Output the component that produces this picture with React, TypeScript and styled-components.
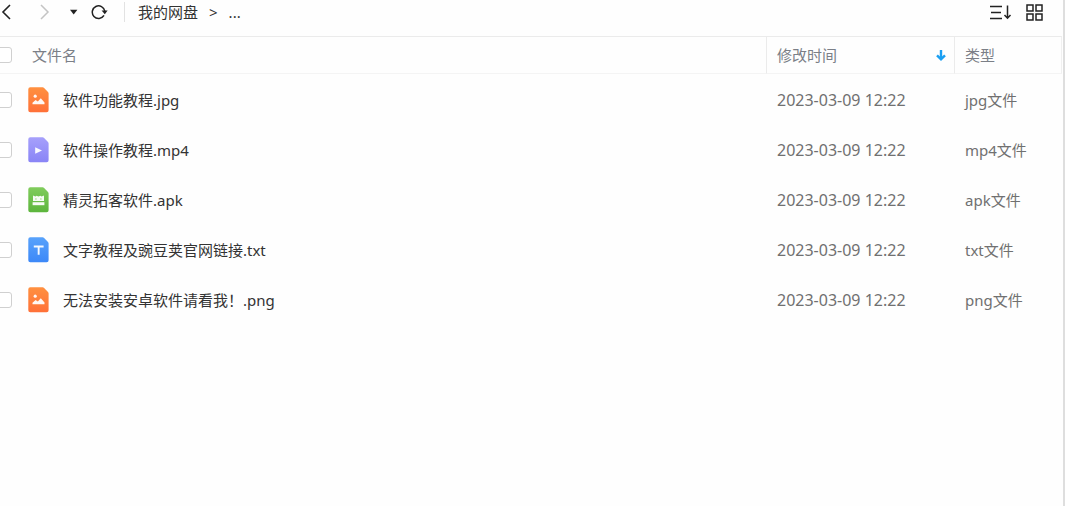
import React from "react";
import styled, { createGlobalStyle } from "styled-components";

const Global = createGlobalStyle`
  *, *::before, *::after { box-sizing: border-box; }
  body {
    margin: 0;
    background: #fefefe;
    color: #333;
    font: 15px/20px "Noto Sans", "Noto Sans CJK SC", sans-serif;
    overflow: hidden;
  }
  button { font: inherit; color: inherit; border: 0; padding: 0; background: none; }
  svg { flex: none; }
`;

const Window = styled.main`
  min-height: 100vh;
  overflow: hidden;
  padding-right: 1px;
  border-right: 2px solid #dedede;
`;

const Toolbar = styled.header`
  display: flex;
  align-items: center;
  justify-content: space-between;
  height: 36px;
  padding: 0 18px 12px 0;
`;

const Group = styled.div<{ $gap: number }>`
  display: flex;
  align-items: center;
  gap: ${({ $gap }) => $gap}px;
`;

const IconButton = styled.button<{ $width: number; $color?: string }>`
  display: flex;
  align-items: center;
  justify-content: center;
  width: ${({ $width }) => $width}px;
  height: 24px;
  color: ${({ $color }) => $color ?? "#222"};
`;

const Breadcrumb = styled.nav`
  display: flex;
  gap: 11px;
  margin-left: 4px;
  padding-left: 13px;
  border-left: 1px solid #e2e2e2;
  a { color: #333; text-decoration: none; }
`;

const FileTable = styled.table`
  width: calc(100% + 4px);
  margin-left: -4px;
  table-layout: fixed;
  border-collapse: separate;
  border-spacing: 0;
`;

const Column = styled.col<{ $width?: number }>`
  width: ${({ $width }) => ($width ? `${$width}px` : "auto")};
`;

const HeadCell = styled.th<{ $divided?: boolean; $last?: boolean }>`
  height: 38px;
  padding: 0 8px 0 ${({ $divided }) => ($divided ? 10 : 0)}px;
  border-top: 1px solid #ebebeb;
  border-bottom: 1px solid #f4f4f4;
  border-left: ${({ $divided }) => ($divided ? "1px solid #ebebeb" : "0")};
  border-right: ${({ $last }) => ($last ? "1px solid #f0f0f0" : "0")};
  font-weight: 400;
  text-align: left;
  color: #7b7f87;
`;

const HeadContent = styled.div<{ $indent?: boolean }>`
  display: flex;
  align-items: center;
  justify-content: space-between;
  height: 20px;
  padding-left: ${({ $indent }) => ($indent ? 8 : 0)}px;
`;

const Cell = styled.td<{ $meta?: boolean }>`
  height: 50px;
  padding: 2px 0 0 ${({ $meta }) => ($meta ? 11 : 0)}px;
  color: ${({ $meta }) => ($meta ? "#707070" : "#333")};
  white-space: nowrap;
`;

const Stamp = styled.time`
  font-size: 16px;
`;

const Checkbox = styled.input.attrs({ type: "checkbox" })`
  appearance: none;
  display: block;
  width: 16px;
  height: 16px;
  margin: 0;
  border: 1px solid #d0d0d0;
  border-radius: 3px;
  background: #fff;
`;

const FileName = styled.div`
  display: flex;
  align-items: center;
  gap: 14px;
  padding-left: 4px;
`;

type Kind = "image" | "video" | "apk" | "text";

const fills: Record<Kind, [string, string]> = {
  image: ["#ff9040", "#ff7038"],
  video: ["#a6a0fb", "#8984f6"],
  apk: ["#80cc5c", "#5cb53c"],
  text: ["#58a2fb", "#3c88f8"],
};

const glyphs: Record<Kind, React.ReactNode> = {
  image: (
    <>
      <circle cx="7.2" cy="9.2" r="1.6" />
      <path d="M4.5 17.2v-1.4L7.6 13l2.2 1.6 3-3.3 3.7 4.2v1.7Z" />
    </>
  ),
  video: <path d="M7.2 10.2v6.6l6.8-3.3Z" />,
  apk: (
    <>
      <path d="M5 8.4 7.4 9.6 8.6 8.8 10.5 9.6 12.4 8.8 13.6 9.6 16 8.4V14H5Z" />
      <path d="M4.6 15.2h11.8v3H4.6Z" />
      <path d="M7.2 11.6h1.4v1H7.2ZM12.2 11.6h1.4v1h-1.4Z" fill="#8fd070" />
    </>
  ),
  text: <path d="M5.8 8.6h9.8v1.8h-4v7.4H9.7v-7.4H5.8Z" />,
};

function FileIcon({ kind }: { kind: Kind }) {
  const [from, to] = fills[kind];
  return (
    <svg width="21" height="26" viewBox="0 0 21 26" aria-hidden="true">
      <defs>
        <linearGradient id={`fill-${kind}`} x1="0" y1="0" x2="0" y2="1">
          <stop stopColor={from} />
          <stop offset="1" stopColor={to} />
        </linearGradient>
      </defs>
      <path
        d="M2 0.3h12.6q.9 0 1.5.6l3.9 4q.6.6.6 1.5V23.3a2 2 0 0 1-2 2H2.3a2 2 0 0 1-2-2V2.3a2 2 0 0 1 2-2Z"
        fill={`url(#fill-${kind})`}
      />
      <g fill="#fff" opacity=".94">{glyphs[kind]}</g>
    </svg>
  );
}

const files: { name: string; type: string; kind: Kind }[] = [
  { name: "软件功能教程.jpg", type: "jpg文件", kind: "image" },
  { name: "软件操作教程.mp4", type: "mp4文件", kind: "video" },
  { name: "精灵拓客软件.apk", type: "apk文件", kind: "apk" },
  { name: "文字教程及豌豆荚官网链接.txt", type: "txt文件", kind: "text" },
  { name: "无法安装安卓软件请看我！.png", type: "png文件", kind: "image" },
];

export default function App() {
  return (
    <>
      <Global />
      <Window>
        <Toolbar>
          <Group $gap={12}>
            <IconButton $width={20} aria-label="后退">
              <svg width="20" height="16" fill="none" stroke="currentColor" strokeWidth="1.6">
                <path d="M10 1 3 8l7 7" />
              </svg>
            </IconButton>
            <IconButton $width={24} $color="#c4c4c4" aria-label="前进">
              <svg width="12" height="16" fill="none" stroke="currentColor" strokeWidth="1.5">
                <path d="m3 1 7 7-7 7" />
              </svg>
            </IconButton>
            <IconButton $width={12} aria-label="历史记录">
              <svg width="8" height="6">
                <path d="M0 0.8h7.4L3.7 5.4Z" fill="currentColor" />
              </svg>
            </IconButton>
            <IconButton $width={16} aria-label="刷新">
              <svg width="18" height="16" fill="none" stroke="currentColor" strokeWidth="1.5">
                <path d="M13 11.4A6.3 6.3 0 1 1 13.8 7.2" />
                <path d="M10.6 6.4h6L13.8 10.2Z" fill="currentColor" stroke="none" />
              </svg>
            </IconButton>
            <Breadcrumb aria-label="路径">
              <a href="#disk">我的网盘</a>
              <span>&gt;</span>
              <a href="#folder">...</a>
            </Breadcrumb>
          </Group>
          <Group $gap={14}>
            <IconButton $width={22} aria-label="排序">
              <svg width="22" height="18" fill="none" stroke="currentColor" strokeWidth="1.5">
                <path d="M0 3.5h12M1 9.5h10M0 15.5h12M17.5 2.5v13M14.5 12l3 3.2 3-3.2" />
              </svg>
            </IconButton>
            <IconButton $width={18} aria-label="网格视图">
              <svg width="18" height="18" fill="none" stroke="currentColor" strokeWidth="1.5">
                <path d="M1 2h6v6H1ZM10 2h6v6h-6ZM1 11h6v6H1ZM10 11h6v6h-6Z" />
              </svg>
            </IconButton>
          </Group>
        </Toolbar>
        <FileTable>
          <colgroup>
            <Column $width={28} />
            <Column />
            <Column $width={188} />
            <Column $width={108} />
          </colgroup>
          <thead>
            <tr>
              <HeadCell>
                <Checkbox aria-label="全选" />
              </HeadCell>
              <HeadCell>
                <HeadContent $indent>文件名</HeadContent>
              </HeadCell>
              <HeadCell $divided>
                <HeadContent>
                  修改时间
                  <IconButton $width={10} $color="#1a9ff2" aria-label="降序">
                    <svg width="10" height="14" fill="none" stroke="currentColor" strokeWidth="2.4">
                      <path d="M5 2v9M1 7.4l4 4 4-4" />
                    </svg>
                  </IconButton>
                </HeadContent>
              </HeadCell>
              <HeadCell $divided $last>
                类型
              </HeadCell>
            </tr>
          </thead>
          <tbody>
            {files.map((file) => (
              <tr key={file.name}>
                <Cell>
                  <Checkbox aria-label={file.name} />
                </Cell>
                <Cell>
                  <FileName>
                    <FileIcon kind={file.kind} />
                    {file.name}
                  </FileName>
                </Cell>
                <Cell $meta>
                  <Stamp dateTime="2023-03-09T12:22">2023-03-09 12:22</Stamp>
                </Cell>
                <Cell $meta>{file.type}</Cell>
              </tr>
            ))}
          </tbody>
        </FileTable>
      </Window>
    </>
  );
}
